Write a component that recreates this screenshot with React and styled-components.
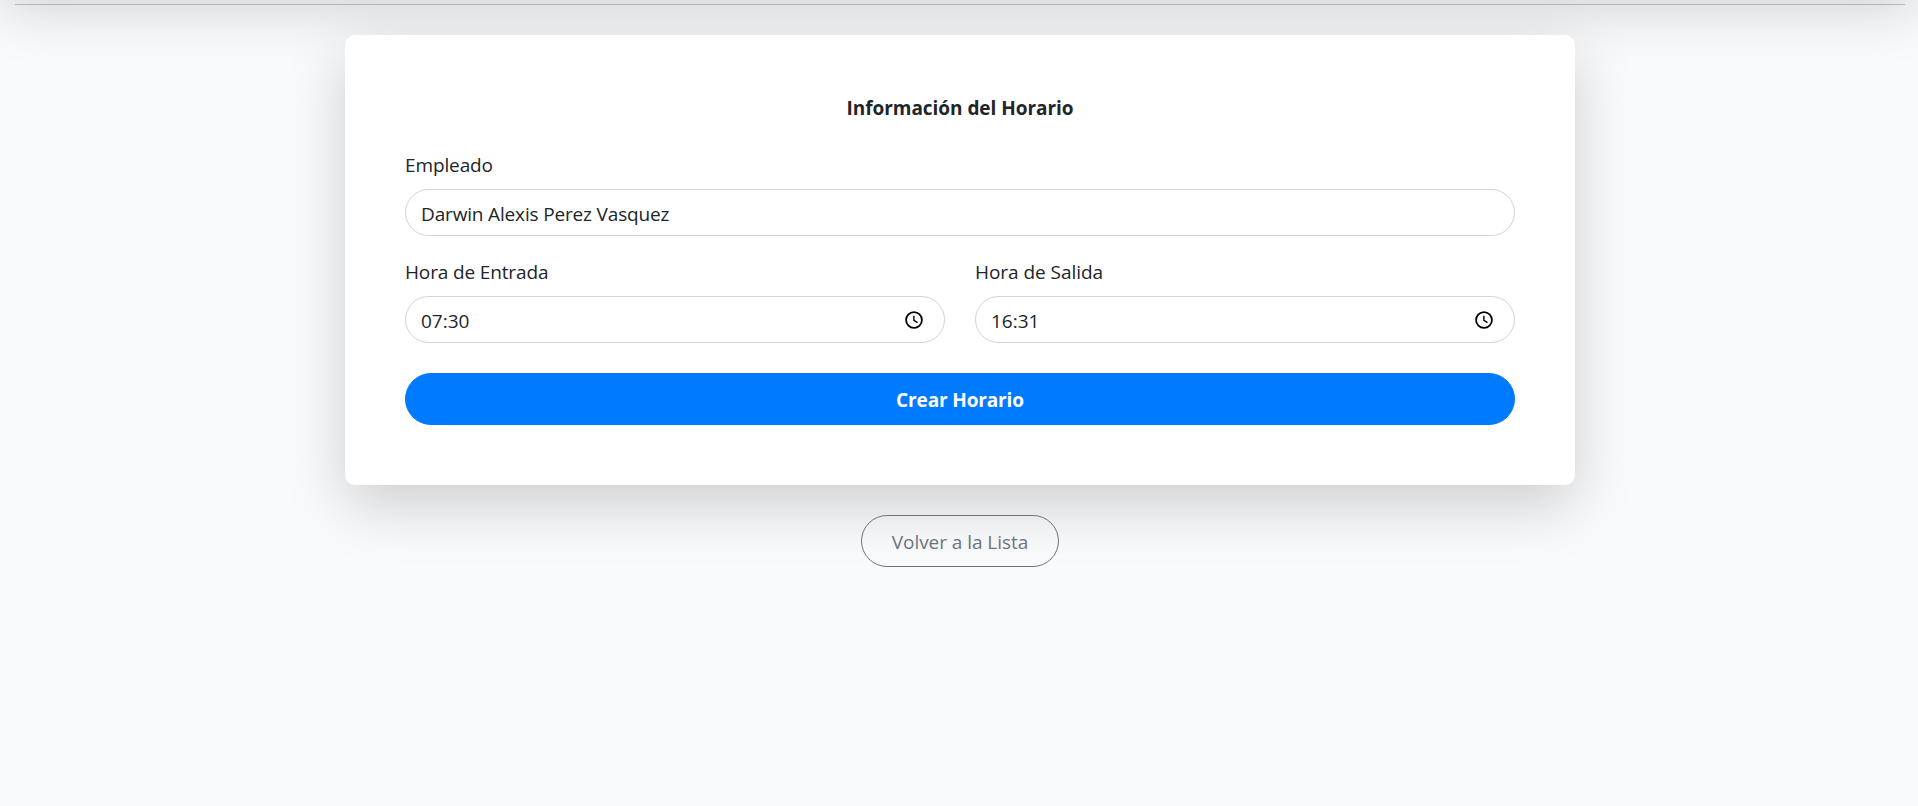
import React from "react";
import styled, { createGlobalStyle } from "styled-components";

const GlobalStyle = createGlobalStyle`
  *, *::before, *::after { box-sizing: border-box; }
  body {
    margin: 0;
    background: #f9fafc;
    color: #212529;
    font-family: "Segoe UI", "Open Sans", "Noto Sans", sans-serif;
    font-size: 19px;
    line-height: 30px;
  }
`;

const Page = styled.div`
  display: flex;
  flex-direction: column;
  align-items: center;
  height: 806px;
  padding-left: 2px;
  overflow: hidden;
`;

const TopPanel = styled.header`
  flex: none;
  align-self: stretch;
  height: 120px;
  margin: -134px 0 18px -2px;
  box-shadow: 0 20px 60px rgba(0, 0, 0, 0.175);
`;

const Divider = styled.hr`
  flex: none;
  align-self: stretch;
  height: 1px;
  margin: 0 13px 30px;
  border: 0;
  background: #212529;
  opacity: 0.25;
`;

const Card = styled.form`
  flex: none;
  display: flex;
  flex-direction: column;
  width: 1230px;
  height: 450px;
  padding: 60px;
  background: #fff;
  border-radius: 10px;
  box-shadow: 0 20px 60px rgba(0, 0, 0, 0.175);
`;

const Title = styled.h5`
  margin: 0;
  padding: 1px 0 29px;
  font-size: 19px;
  font-weight: 700;
  line-height: 24px;
  letter-spacing: ${(p) => p.$track};
  text-align: center;
`;

const Row = styled.div`
  display: grid;
  grid-template-columns: repeat(${(p) => p.$columns}, 1fr);
  column-gap: 30px;
  margin-bottom: ${(p) => p.$gap}px;
`;

const Field = styled.div`
  display: flex;
  flex-direction: column;
`;

const Label = styled.label`
  padding: 1px 0 9px;
  letter-spacing: ${(p) => p.$track};
`;

const Control = styled.div`
  display: flex;
  align-items: center;
  justify-content: space-between;
  height: 47px;
  padding: 2px 21px 0 15px;
  border: 1px solid #ced4da;
  border-radius: 24px;
  background: #fff;
  letter-spacing: ${(p) => p.$track};
`;

const Clock = styled.svg`
  width: 18px;
  height: 18px;
  margin-top: -2px;
  fill: none;
  stroke: #000;
`;

const Button = styled.button`
  flex: none;
  height: 52px;
  padding: 2px 30px 0;
  border: 1px solid ${(p) => (p.$primary ? "#007bff" : "#6c757d")};
  border-radius: 26px;
  background: ${(p) => (p.$primary ? "#007bff" : "transparent")};
  color: ${(p) => (p.$primary ? "#fff" : "#6c757d")};
  font: inherit;
  font-weight: ${(p) => (p.$primary ? 700 : 400)};
  letter-spacing: ${(p) => p.$track};
`;

const BackButton = styled(Button)`
  width: 198px;
  margin-top: 30px;
  padding: 2px 0 0;
`;

function TimeField({ label, value, track }) {
  return (
    <Field>
      <Label $track={track}>{label}</Label>
      <Control $track="0">
        <span>{value}</span>
        <Clock viewBox="0 0 18 18">
          <circle cx="9" cy="9" r="7.9" strokeWidth="1.8" />
          <path d="M8.9 4.8v4.6l3.6 2.2" strokeWidth="1.4" />
        </Clock>
      </Control>
    </Field>
  );
}

export default function App() {
  return (
    <>
      <GlobalStyle />
      <Page>
        <TopPanel />
        <Divider />
        <Card>
          <Title $track="-0.04px">Información del Horario</Title>
          <Row $columns={1} $gap={20}>
            <Field>
              <Label $track="-0.12px">Empleado</Label>
              <Control $track="-0.16px">Darwin Alexis Perez Vasquez</Control>
            </Field>
          </Row>
          <Row $columns={2} $gap={30}>
            <TimeField label="Hora de Entrada" value="07:30" track="-0.14px" />
            <TimeField label="Hora de Salida" value="16:31" track="-0.04px" />
          </Row>
          <Button type="button" $primary $track="-0.14px">Crear Horario</Button>
        </Card>
        <BackButton type="button" $track="-0.05px">Volver a la Lista</BackButton>
      </Page>
    </>
  );
}
